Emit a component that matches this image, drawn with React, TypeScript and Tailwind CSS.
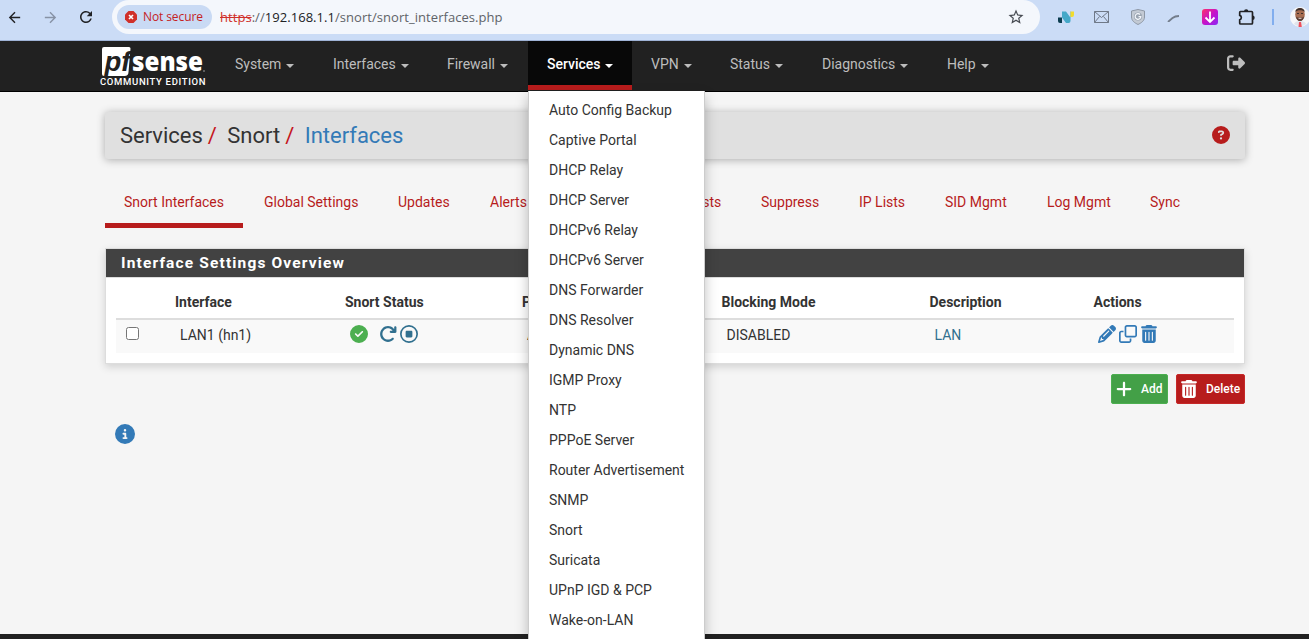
import type { ReactNode } from "react";
import {
  FaArrowRotateRight,
  FaCircleCheck,
  FaCircleInfo,
  FaCircleQuestion,
  FaPencil,
  FaPlus,
  FaRegCircleStop,
  FaRegClone,
  FaRightFromBracket,
  FaTrashCan,
} from "react-icons/fa6";
import { MdArrowBack, MdArrowForward, MdRefresh, MdStarBorder } from "react-icons/md";

const servicesMenu = [
  "Auto Config Backup",
  "Captive Portal",
  "DHCP Relay",
  "DHCP Server",
  "DHCPv6 Relay",
  "DHCPv6 Server",
  "DNS Forwarder",
  "DNS Resolver",
  "Dynamic DNS",
  "IGMP Proxy",
  "NTP",
  "PPPoE Server",
  "Router Advertisement",
  "SNMP",
  "Snort",
  "Suricata",
  "UPnP IGD & PCP",
  "Wake-on-LAN",
];

const navItems = [
  { label: "System", width: "w-[98px]" },
  { label: "Interfaces", width: "w-[114px]" },
  { label: "Firewall", width: "w-[100px]" },
  { label: "Services", width: "w-[104px]" },
  { label: "VPN", width: "w-[79px]" },
  { label: "Status", width: "w-[92px]" },
  { label: "Diagnostics", width: "w-[125px]" },
  { label: "Help", width: "w-[80px]" },
];

const tabs = [
  { label: "Snort Interfaces", width: "w-[138px]" },
  { label: "Global Settings", width: "w-[132px]" },
  { label: "Updates", width: "w-[90px]" },
  { label: "Alerts", width: "w-[75px]" },
  { label: "Blocked", width: "w-[88px]" },
  { label: "Pass Lists", width: "w-[102px]" },
  { label: "Suppress", width: "w-[96px]" },
  { label: "IP Lists", width: "w-[84px]" },
  { label: "SID Mgmt", width: "w-[100px]" },
  { label: "Log Mgmt", width: "w-[101px]" },
  { label: "Sync", width: "w-[68px]" },
];

const columns = "grid grid-cols-[54px_170px_177px_199.5px_208px_164px_145.5px]";

function BrowserBar() {
  return (
    <div className="flex h-[41px] items-start border-b border-[#9fb3d6] bg-[#cbdcf6] tracking-normal text-[#202124]">
      <div className="flex h-[34px] w-[112px] shrink-0 items-center pl-[6px]">
        <MdArrowBack className="size-[17px]" />
        <MdArrowForward className="ml-[19px] size-[17px] text-[#8792a5]" />
        <MdRefresh className="ml-[18px] size-[18px]" />
      </div>
      <div className="flex h-[34px] w-[928px] shrink-0 items-center rounded-[17px] bg-[#f4f7fc] pl-[5px] font-['Open_Sans',sans-serif] text-[13px]">
        <div className="flex h-6 w-[95px] items-center rounded-full bg-[#c9daf4] pl-2 text-[12px] tracking-[-0.1px] text-[#c5221f]">
          <svg viewBox="0 0 12 12" className="size-3">
            <path d="M3.5 0h5L12 3.5v5L8.5 12h-5L0 8.5v-5Z" fill="#d0302a" />
            <path d="m4 4 4 4M8 4 4 8" stroke="#fff" strokeWidth="1.6" />
          </svg>
          <span className="ml-[6px] whitespace-nowrap">Not secure</span>
        </div>
        <div className="ml-2 whitespace-nowrap tracking-[0.05px] text-[#5f6368]">
          <span className="text-[#d0302a] line-through">https</span>://
          <span className="text-[#202124]">192.168.1.1</span>/snort/snort_interfaces.php
        </div>
        <MdStarBorder className="ml-auto mr-[15px] size-[18px] text-[#474b52]" />
      </div>
      <div className="flex h-[34px] flex-1 items-center overflow-hidden pl-[17px]">
        <svg viewBox="0 0 18 12" className="h-3 w-[18px] shrink-0">
          <path d="M1 6.5h4V12H3a2 2 0 0 1-2-2Z" fill="#0b3c4f" />
          <path d="M5 .5h4l4 5.500V.5h.5V10a2 2 0 0 1-2 2H9L5 6.500Z" fill="#45a8c8" />
          <path d="M13.500 .5H17V4a2 2 0 0 1-2 2h-1.500Z" fill="#f2dc2b" />
        </svg>
        <svg viewBox="0 0 15 12" className="ml-[19px] h-3 w-[15px] shrink-0" fill="none" stroke="#6f7988">
          <path d="M.5.5h14v11H.5ZM.5.5l7 6 7-6M.5 11.5l5-6M14.5 11.5l-5-6" />
        </svg>
        <svg viewBox="0 0 14 16" className="ml-[22px] h-4 w-[14px] shrink-0">
          <path d="M7 .5 13.5 2v6c0 4-3.5 6-6.5 7.5C4 14 .5 12 .5 8V2Z" fill="#c3cad4" stroke="#8d97a5" />
          <circle cx="7" cy="7.5" r="4" fill="#9aa4b1" />
          <path d="M9 5.5a2.8 2.8 0 1 0 .8 2.2H7.5" fill="none" stroke="#f4f7fc" strokeWidth="1.2" />
        </svg>
        <svg viewBox="0 0 13 10" className="ml-[22px] h-[10px] w-[13px] shrink-0" fill="none" stroke="#737d8b">
          <path d="M1 10 5.5 6Q8 4 12 4" strokeWidth="1.8" />
        </svg>
        <svg viewBox="0 0 16 16" className="ml-[22px] size-4 shrink-0">
          <defs>
            <linearGradient id="download" x1="0" y1="0" x2="1" y2="1">
              <stop stopColor="#ff2f68" />
              <stop offset=".5" stopColor="#c613c9" />
              <stop offset="1" stopColor="#8b29f4" />
            </linearGradient>
          </defs>
          <rect width="16" height="16" rx="3" fill="url(#download)" />
          <path d="M8 2.5v10M3.5 8.5 8 13l4.5-4.5" fill="none" stroke="#fff" strokeWidth="1.8" />
        </svg>
        <svg viewBox="0 0 18 18" className="ml-[20px] size-[18px] shrink-0">
          <path
            d="M2.5 3.5h11a1 1 0 0 1 1 1v10.5a1 1 0 0 1-1 1h-11a.8.8 0 0 1-.8-.8v-3.4a2.3 2.3 0 0 0 0-4.4v-3a.9.9 0 0 1 .8-.9Z"
            fill="none"
            stroke="#202124"
            strokeWidth="1.7"
          />
          <path d="M6 3.5a2.2 2.2 0 0 1 4.4 0ZM14.5 7.5a2.2 2.2 0 0 1 0 4.4Z" fill="#202124" />
        </svg>
        <div className="ml-[16px] h-4 w-[2px] shrink-0 bg-[#82aeee]" />
        <svg viewBox="0 0 20 20" className="ml-4 size-5 shrink-0">
          <circle cx="10" cy="10" r="10" fill="#f6f7f9" />
          <path d="M4 17q1-3 6-3t6 3a10 10 0 0 1-12 0Z" fill="#e1e5ec" />
          <ellipse cx="10" cy="7.5" rx="4.8" ry="6.5" fill="#a66c50" />
          <path d="M5.300 5C5-.5 15-.5 14.7 5 13 2.5 7 2.5 5.300 5" fill="#40302b" />
          <path d="M5.8 9q.7 5 4.2 5t4.200-5q-1 2-2 1.500H8Q6.5 11 5.8 9" fill="#5a3e35" />
          <path d="M7 6.5h2M11 6.5h2" stroke="#40302b" />
          <path d="M8.5 11.3h3" stroke="#e9d9d2" />
          <path d="M9 15h2l.8 5H8.5Z" fill="#ef505c" />
        </svg>
      </div>
    </div>
  );
}

function Logo() {
  return (
    <svg viewBox="0 0 110 42" className="h-[42px] w-[110px] shrink-0 overflow-visible">
      <path d="M4 0h25q1.500 0 1.500 1.500L28.500 25q0 4-4 4H4a2 2 0 0 1-2-2V2a2 2 0 0 1 2-2Z" fill="#fff" />
      <text
        x="4.5"
        y="23.5"
        fontFamily="Liberation Sans"
        fontSize="27"
        fontWeight="700"
        fontStyle="italic"
        fill="#212121"
        textLength="26"
        lengthAdjust="spacingAndGlyphs"
      >
        pf
      </text>
      <text
        x="32"
        y="24"
        fontFamily="Open Sans"
        fontSize="26"
        fontWeight="800"
        fill="#fff"
        textLength="71"
        lengthAdjust="spacingAndGlyphs"
      >
        sense
      </text>
      <circle cx="104" cy="24" r=".8" fill="#aaa" />
      <text x="0" y="37.5" fontFamily="Roboto" fontSize="9.5" fontWeight="500" fill="#fff" textLength="105.5">
        COMMUNITY EDITION
      </text>
    </svg>
  );
}

function ServicesMenu() {
  return (
    <ul className="absolute left-0 top-[50px] z-10 h-[560px] w-[176.5px] border-x border-black/20 bg-white pt-1 text-[#333] shadow-[0_6px_12px_rgba(0,0,0,0.25)]">
      {servicesMenu.map((item) => (
        <li key={item} className="h-[30px] whitespace-nowrap pl-5 font-normal leading-[30px]">
          {item}
        </li>
      ))}
    </ul>
  );
}

function NavBar() {
  return (
    <nav className="flex h-[51px] items-start border-b border-black bg-[#212121] pl-[100px] text-[#bdbdbd]">
      <div className="w-[116px] pt-[6px]">
        <Logo />
      </div>
      {navItems.map(({ label, width }) => {
        const active = label === "Services";
        return (
          <div
            key={label}
            className={`relative h-[49px] shrink-0 ${width} ${active ? "border-b-[5px] border-[#b71c1c] bg-[#080808] font-medium text-white" : ""}`}
          >
            <div className="flex h-[46px] items-center whitespace-nowrap pl-[19px] tracking-[-0.02px]">
              {label}
              <span className="ml-[5px] mt-[3px] border-x-4 border-t-4 border-x-transparent border-t-current" />
            </div>
            {active && <ServicesMenu />}
          </div>
        );
      })}
      <FaRightFromBracket className="ml-[219px] mt-[13px] size-[18px] shrink-0" />
    </nav>
  );
}

function Row({ cells, className }: { cells: ReactNode[]; className: string }) {
  return (
    <div className={`${columns} ${className}`}>
      {cells.map((cell, i) => (
        <div key={i} className="flex items-center pl-[5px]">
          {cell}
        </div>
      ))}
    </div>
  );
}

export default function App() {
  return (
    <div className="flex h-[639px] w-[1309px] flex-col overflow-hidden bg-[#f5f5f5] font-[Roboto,sans-serif] text-sm tracking-normal text-[#333]">
      <BrowserBar />
      <NavBar />
      <main className="ml-[105px] w-[1140px] flex-1 pt-5">
        <header className="flex h-[47px] items-center rounded-[3px] bg-[#e0e0e0] px-[15px] text-[22px] tracking-[-0.02px] shadow-[0_1px_8px_rgba(0,0,0,0.3)]">
          <span>Services</span>
          <span className="ml-[5px] text-[#c5161d]">/</span>
          <span className="ml-[10.5px]">Snort</span>
          <span className="ml-[5px] text-[#c5161d]">/</span>
          <span className="ml-[10.5px] text-[#337ab7]">Interfaces</span>
          <FaCircleQuestion className="mb-px ml-auto size-[18px] text-[#b71c1c]" />
        </header>

        <div className="mt-[19px] flex h-[50px] gap-[2px] text-[#b71c1c]">
          {tabs.map(({ label, width }, i) => (
            <div
              key={label}
              className={`${width} shrink-0 whitespace-nowrap pl-[19px] pt-[14px] ${i === 0 ? "border-b-[5px] border-[#b71c1c]" : ""}`}
            >
              {label}
            </div>
          ))}
        </div>

        <section className="mt-5 h-[116px] border border-[#ddd] bg-white shadow-[0_3px_8px_rgba(0,0,0,0.15)]">
          <h2 className="h-[29px] border-b border-[#ddd] bg-[#424242] pl-[15px] text-[15.5px] font-bold leading-[28px] tracking-[1.15px] text-white">
            Interface Settings Overview
          </h2>
          <div className="px-[10px] pt-[10px]">
            <Row
              className="h-[32px] border-b-2 border-[#ddd] pb-[2px] font-bold"
              cells={["", "Interface", "Snort Status", "Pattern Match", "Blocking Mode", "Description", "Actions"]}
            />
            <Row
              className="h-[33px] w-[1118px] bg-[#f9f9f9] pb-[3px]"
              cells={[
                <input key="select" type="checkbox" className="mb-[3px] ml-[5px] size-[13px]" />,
                <span key="name" className="pl-[5px]">LAN1 (hn1)</span>,
                <span key="status" className="flex items-center pb-[2px] pl-[5px] text-[18px] text-[#31708f]">
                  <FaCircleCheck className="text-[#4caf50]" />
                  <FaArrowRotateRight className="ml-[11px]" />
                  <FaRegCircleStop className="ml-[3px]" />
                </span>,
                <span key="match" className="pl-[5px]">AC-BNFA</span>,
                <span key="mode" className="pl-[5px]">DISABLED</span>,
                <span key="description" className="pl-[5px] text-[#31708f]">LAN</span>,
                <span key="actions" className="flex items-center gap-[3px] pb-[2px] pl-[4.5px] text-[18px] text-[#337ab7]">
                  <FaPencil />
                  <FaRegClone />
                  <FaTrashCan />
                </span>,
              ]}
            />
          </div>
        </section>

        <div className="mt-[10px] flex h-[30px] justify-end gap-2 text-xs font-medium tracking-normal text-white">
          <button className="flex w-[57px] items-center rounded-[2px] border border-[#4caf50] bg-[#43a047] pl-[3px]">
            <FaPlus className="size-[18px]" />
            <span className="ml-2">Add</span>
          </button>
          <button className="flex w-[69px] items-center rounded-[2px] border border-[#c62828] bg-[#b71c1c] pl-[3px]">
            <FaTrashCan className="size-[18px]" />
            <span className="ml-2">Delete</span>
          </button>
        </div>
        <FaCircleInfo className="ml-[10px] mt-[19.5px] size-5 text-[#337ab7]" />
      </main>
      <footer className="h-[5px] shrink-0 bg-[#212121]" />
    </div>
  );
}
